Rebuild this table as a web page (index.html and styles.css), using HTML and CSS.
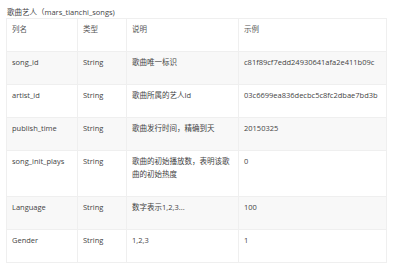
FILE: index.html
```html
<!DOCTYPE html>
<html>
<head>
<meta charset="utf-8">
<link rel="stylesheet" href="styles.css">
</head>
<body>
<div class="page">
  <div class="title">歌曲艺人（mars_tianchi_songs)</div>
  <table class="tbl">
    <colgroup>
      <col class="c1"><col class="c2"><col class="c3"><col class="c4">
    </colgroup>
    <tr class="head"><td>列名</td><td>类型</td><td>说明</td><td>示例</td></tr>
    <tr class="alt"><td>song_id</td><td>String</td><td>歌曲唯一标识</td><td>c81f89cf7edd24930641afa2e411b09c</td></tr>
    <tr><td>artist_id</td><td>String</td><td>歌曲所属的艺人Id</td><td>03c6699ea836decbc5c8fc2dbae7bd3b</td></tr>
    <tr class="alt"><td>publish_time</td><td>String</td><td>歌曲发行时间，精确到天</td><td>20150325</td></tr>
    <tr><td>song_init_plays</td><td>String</td><td>歌曲的初始播放数，表明该歌曲的初始热度</td><td>0</td></tr>
    <tr class="alt"><td>Language</td><td>String</td><td>数字表示1,2,3...</td><td>100</td></tr>
    <tr><td>Gender</td><td>String</td><td>1,2,3</td><td>1</td></tr>
  </table>
</div>
</body>
</html>
```
FILE: styles.css
```css
html, body { margin: 0; padding: 0; background: #fff; }
body {
  font-family: "Open Sans", "Noto Sans CJK SC", sans-serif;
  font-size: 7.5px;
  color: #444;
}
.page { padding: 7px 0 0 6px; }
.title {
  padding-left: 1px;
  line-height: 11px;
  height: 11px;
  color: #444;
}
.tbl {
  border-collapse: collapse;
  table-layout: fixed;
  width: 380px;
}
.c1 { width: 71px; }
.c2 { width: 49px; }
.c3 { width: 112px; }
.c4 { width: 148px; }
.tbl td {
  border: 1px solid #efefef;
  padding: 4px 5px 15px 5px;
  line-height: 13px;
  vertical-align: top;
  word-break: break-all;
}
.tbl tr.alt td { background: #f8f8f8; }
.tbl tr.head td { color: #555; }
```
